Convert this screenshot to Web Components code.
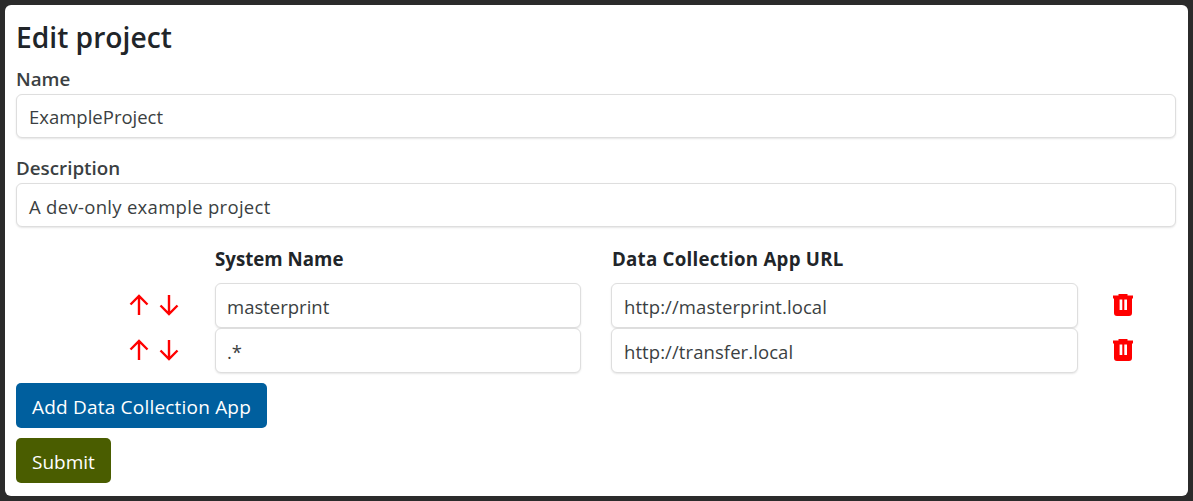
<!DOCTYPE html>
<html lang="en">
<head>
<meta charset="utf-8">
<title>Edit project</title>
<style>
  html, body { margin: 0; height: 100%; background: #2b2b2b; }
  body { padding: 5px; box-sizing: border-box; font-family: "Open Sans", "Noto Sans", sans-serif; color: #212529; }
</style>
</head>
<body>
<project-form>
  <span slot="title">Edit project</span>
  <form-field label="Name">ExampleProject</form-field>
  <form-field label="Description" track="0.3px">A dev-only example project</form-field>
  <app-table>
    <app-row system="masterprint" url="http://masterprint.local"></app-row>
    <app-row system=".*" url="http://transfer.local"></app-row>
  </app-table>
  <form-button color="#005f9e" track="0.2px">Add Data Collection App</form-button>
  <form-button color="#4a5d00">Submit</form-button>
</project-form>

<script>
const inputStyles = `
  .input {
    box-sizing: border-box;
    padding: 1px 12px 0;
    display: flex;
    align-items: center;
    background: #fff;
    border: 1px solid #dedede;
    border-radius: 6px;
    box-shadow: 0 1px 2px rgba(0, 0, 0, 0.1);
    font-size: 18.5px;
    color: #3b3f42;
    white-space: nowrap;
  }
`;

class ProjectForm extends HTMLElement {
  constructor() {
    super();
    this.attachShadow({ mode: "open" }).innerHTML = `
      <style>
        :host {
          display: block;
          box-sizing: border-box;
          height: 491px;
          padding: 11px 12px 0 11px;
          background: #fff;
          border-radius: 6px;
        }
        h1 {
          margin: 0 0 7px;
          font-size: 28.2px;
          line-height: 42px;
          font-weight: 600;
          color: #212529;
        }
      </style>
      <h1><slot name="title"></slot></h1>
      <slot></slot>
    `;
  }
}

class FormField extends HTMLElement {
  constructor() {
    super();
    this.attachShadow({ mode: "open" }).innerHTML = `
      <style>
        :host { display: block; margin-bottom: 16.4px; }
        label {
          display: block;
          height: 29px;
          line-height: 29.6px;
          font-size: 18.8px;
          font-weight: 600;
          color: #3b3f42;
        }
        ${inputStyles}
        .input { height: 44px; padding-top: 1.6px; letter-spacing: var(--track, 0); }
      </style>
      <label></label>
      <div class="input" role="textbox"><slot></slot></div>
    `;
    this.shadowRoot.querySelector("label").textContent = this.getAttribute("label");
    if (this.hasAttribute("track")) this.style.setProperty("--track", this.getAttribute("track"));
  }
}

class AppTable extends HTMLElement {
  constructor() {
    super();
    this.attachShadow({ mode: "open" }).innerHTML = `
      <style>
        :host { display: block; margin: -3.8px 0 10px; }
        .head {
          display: grid;
          grid-template-columns: 199px 366px 30px 467px;
          height: 38px;
          margin-bottom: 5px;
          align-items: center;
          font-size: 18.7px;
          font-weight: 700;
          color: #212529;
        }
        .head span:nth-child(1) { grid-column: 2; }
        .head span:nth-child(2) { grid-column: 4; padding-left: 1px; letter-spacing: 0.25px; }
      </style>
      <div class="head"><span>System Name</span><span>Data Collection App URL</span></div>
      <slot></slot>
    `;
  }
}

class AppRow extends HTMLElement {
  constructor() {
    super();
    this.attachShadow({ mode: "open" }).innerHTML = `
      <style>
        :host {
          display: grid;
          grid-template-columns: 199px 366px 30px 467px 1fr;
          align-items: center;
        }
        .arrows {
          display: flex;
          justify-content: flex-end;
          gap: 8px;
          padding-right: 35px;
        }
        .trash { padding-left: 34.7px; display: flex; }
        svg { display: block; }
        ${inputStyles}
        .input { height: 45px; padding-top: 2.4px; }
        .system { padding-left: 11px; }
        .url { letter-spacing: 0.08px; }
      </style>
      <div class="arrows">
        <svg width="22" height="22" viewBox="0 0 22 22" fill="none" stroke="#f00" stroke-width="2.4" aria-label="Move up">
          <path d="M11 21V2.500M2.500 10.500L11 2l8.500 8.500"/>
        </svg>
        <svg width="22" height="22" viewBox="0 0 22 22" fill="none" stroke="#f00" stroke-width="2.4" aria-label="Move down">
          <path d="M11 1v18.500M2.500 11.500L11 20l8.500-8.500"/>
        </svg>
      </div>
      <div class="input system" role="textbox"></div>
      <div></div>
      <div class="input url" role="textbox"></div>
      <div class="trash">
        <svg width="20" height="22" viewBox="0 0 20 22" aria-label="Delete">
          <path fill="#f00" fill-rule="evenodd" d="M5.500 0h9v1.500H20V4.500h-1V19a3 3 0 0 1-3 3H4a3 3 0 0 1-3-3V4.500H0V1.500h5.500zM6.600 5.500V16h2.700V5.500zM11.300 5.500V16H14V5.500z"/>
        </svg>
      </div>
    `;
    this.shadowRoot.querySelector(".system").textContent = this.getAttribute("system");
    this.shadowRoot.querySelector(".url").textContent = this.getAttribute("url");
  }
}

class FormButton extends HTMLElement {
  constructor() {
    super();
    this.attachShadow({ mode: "open" }).innerHTML = `
      <style>
        :host { display: block; margin-bottom: 10px; }
        button {
          display: block;
          height: 45px;
          padding: 3px 16px 0;
          border: 0;
          border-radius: 5px;
          background: var(--btn);
          color: #fff;
          font: inherit;
          font-size: 19px;
          letter-spacing: var(--track, 0);
        }
      </style>
      <button type="button"><slot></slot></button>
    `;
    this.style.setProperty("--btn", this.getAttribute("color"));
    if (this.hasAttribute("track")) this.style.setProperty("--track", this.getAttribute("track"));
  }
}

customElements.define("project-form", ProjectForm);
customElements.define("form-field", FormField);
customElements.define("app-table", AppTable);
customElements.define("app-row", AppRow);
customElements.define("form-button", FormButton);
</script>
</body>
</html>
